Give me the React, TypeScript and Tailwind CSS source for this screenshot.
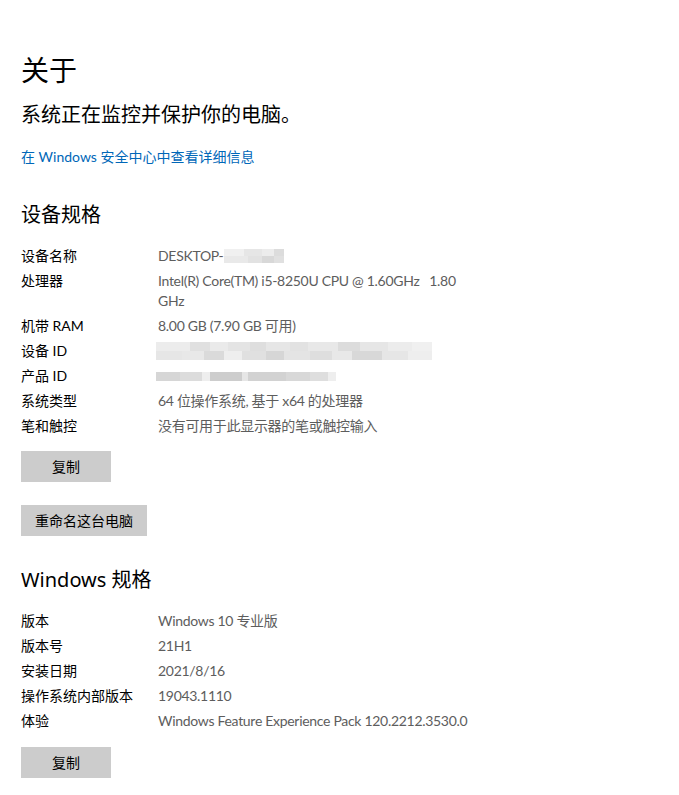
import React from 'react'

const font = { fontFamily: '"Noto Sans", "Noto Sans CJK SC", sans-serif' }
const small = { fontFamily: 'Lato, "Noto Sans CJK SC", sans-serif' }

// pixelated "blur" blocks used for redacted values
function Pixels({ rows, h }: { rows: [number, string][][]; h: number }) {
  return (
    <div className="flex flex-col">
      {rows.map((r, i) => (
        <div key={i} className="flex">
          {r.map(([w, c], j) => (
            <div key={j} style={{ width: w, height: h, background: c }} />
          ))}
        </div>
      ))}
    </div>
  )
}

function Row({ label, children }: { label: string; children: React.ReactNode }) {
  return (
    <div className="flex text-[14px] leading-[20px]" style={small}>
      <div className="w-[137px] shrink-0 text-black">{label}</div>
      <div className="text-[#5d5d5d] tracking-[-0.3px]">{children}</div>
    </div>
  )
}

function Btn({ children, w }: { children: React.ReactNode; w: string }) {
  return (
    <button
      type="button"
      style={small}
      className={`h-[31px] ${w} bg-[#cccccc] text-[14px] text-black flex items-center justify-center`}
    >
      {children}
    </button>
  )
}

export default function App() {
  return (
    <div className="min-h-[795px] bg-white pl-[21px] pt-[50px] pb-4" style={font}>
      <h1 className="text-[28px] leading-[40px] text-black">关于</h1>
      <p className="mt-[11px] text-[20px] leading-[28px] text-black">系统正在监控并保护你的电脑。</p>
      <a className="mt-[18px] block text-[14px] leading-[20px] text-[#0067b8]" style={small}>
        在 Windows 安全中心中查看详细信息
      </a>

      <h2 className="mt-[34px] text-[20px] leading-[28px] text-black">设备规格</h2>
      <div className="mt-[17px] flex flex-col gap-[5px]">
        <Row label="设备名称">
          <span className="flex items-center">
            DESKTOP-
            <Pixels
              h={7}
              rows={[
                [[20, '#f0f0f0'], [18, '#e6e6e6'], [12, '#ececec'], [10, '#dcdcdc']],
                [[24, '#e9e9e9'], [14, '#e2e2e2'], [12, '#d8d8d8'], [10, '#e0e0e0']],
              ]}
            />
          </span>
        </Row>
        <Row label="处理器">
          <span className="whitespace-pre">Intel(R) Core(TM) i5-8250U CPU @ 1.60GHz   1.80</span>
          <br />
          GHz
        </Row>
        <Row label="机带 RAM">8.00 GB (7.90 GB 可用)</Row>
        <Row label="设备 ID">
          <div className="-ml-[2px] pt-[1px]">
            <Pixels
              h={9}
              rows={[
                [[34, '#ececec'], [20, '#e0e0e0'], [18, '#eaeaea'], [22, '#e4e4e4'], [16, '#dedede'], [24, '#e6e6e6'], [18, '#e2e2e2'], [30, '#e8e8e8'], [22, '#dcdcdc'], [28, '#e6e6e6'], [24, '#ececec'], [20, '#f0f0f0']],
                [[26, '#e6e6e6'], [22, '#e8e8e8'], [20, '#dadada'], [18, '#eeeeee'], [24, '#e0e0e0'], [18, '#d6d6d6'], [26, '#e4e4e4'], [22, '#dedede'], [20, '#e8e8e8'], [30, '#d8d8d8'], [26, '#e6e6e6'], [24, '#eeeeee']],
              ]}
            />
          </div>
        </Row>
        <Row label="产品 ID">
          <div className="-ml-[2px] flex h-[20px] items-center">
            <Pixels
              h={9}
              rows={[
                [[24, '#d6d6d6'], [22, '#dcdcdc'], [8, '#eeeeee'], [32, '#cdcdcd'], [6, '#e6e6e6'], [38, '#d2d2d2'], [24, '#d8d8d8'], [18, '#dedede'], [8, '#eeeeee']],
              ]}
            />
          </div>
        </Row>
        <Row label="系统类型">64 位操作系统, 基于 x64 的处理器</Row>
        <Row label="笔和触控">没有可用于此显示器的笔或触控输入</Row>
      </div>

      <div className="mt-[15px]">
        <Btn w="w-[90px]">复制</Btn>
      </div>
      <div className="mt-[23px]">
        <Btn w="w-[126px]">重命名这台电脑</Btn>
      </div>

      <h2 className="mt-[30px] text-[20px] leading-[28px] text-black">Windows 规格</h2>
      <div className="mt-[17px] flex flex-col gap-[5px]">
        <Row label="版本">Windows 10 专业版</Row>
        <Row label="版本号">21H1</Row>
        <Row label="安装日期">2021/8/16</Row>
        <Row label="操作系统内部版本">19043.1110</Row>
        <Row label="体验">Windows Feature Experience Pack 120.2212.3530.0</Row>
      </div>

      <div className="mt-[16px]">
        <Btn w="w-[90px]">复制</Btn>
      </div>
    </div>
  )
}
